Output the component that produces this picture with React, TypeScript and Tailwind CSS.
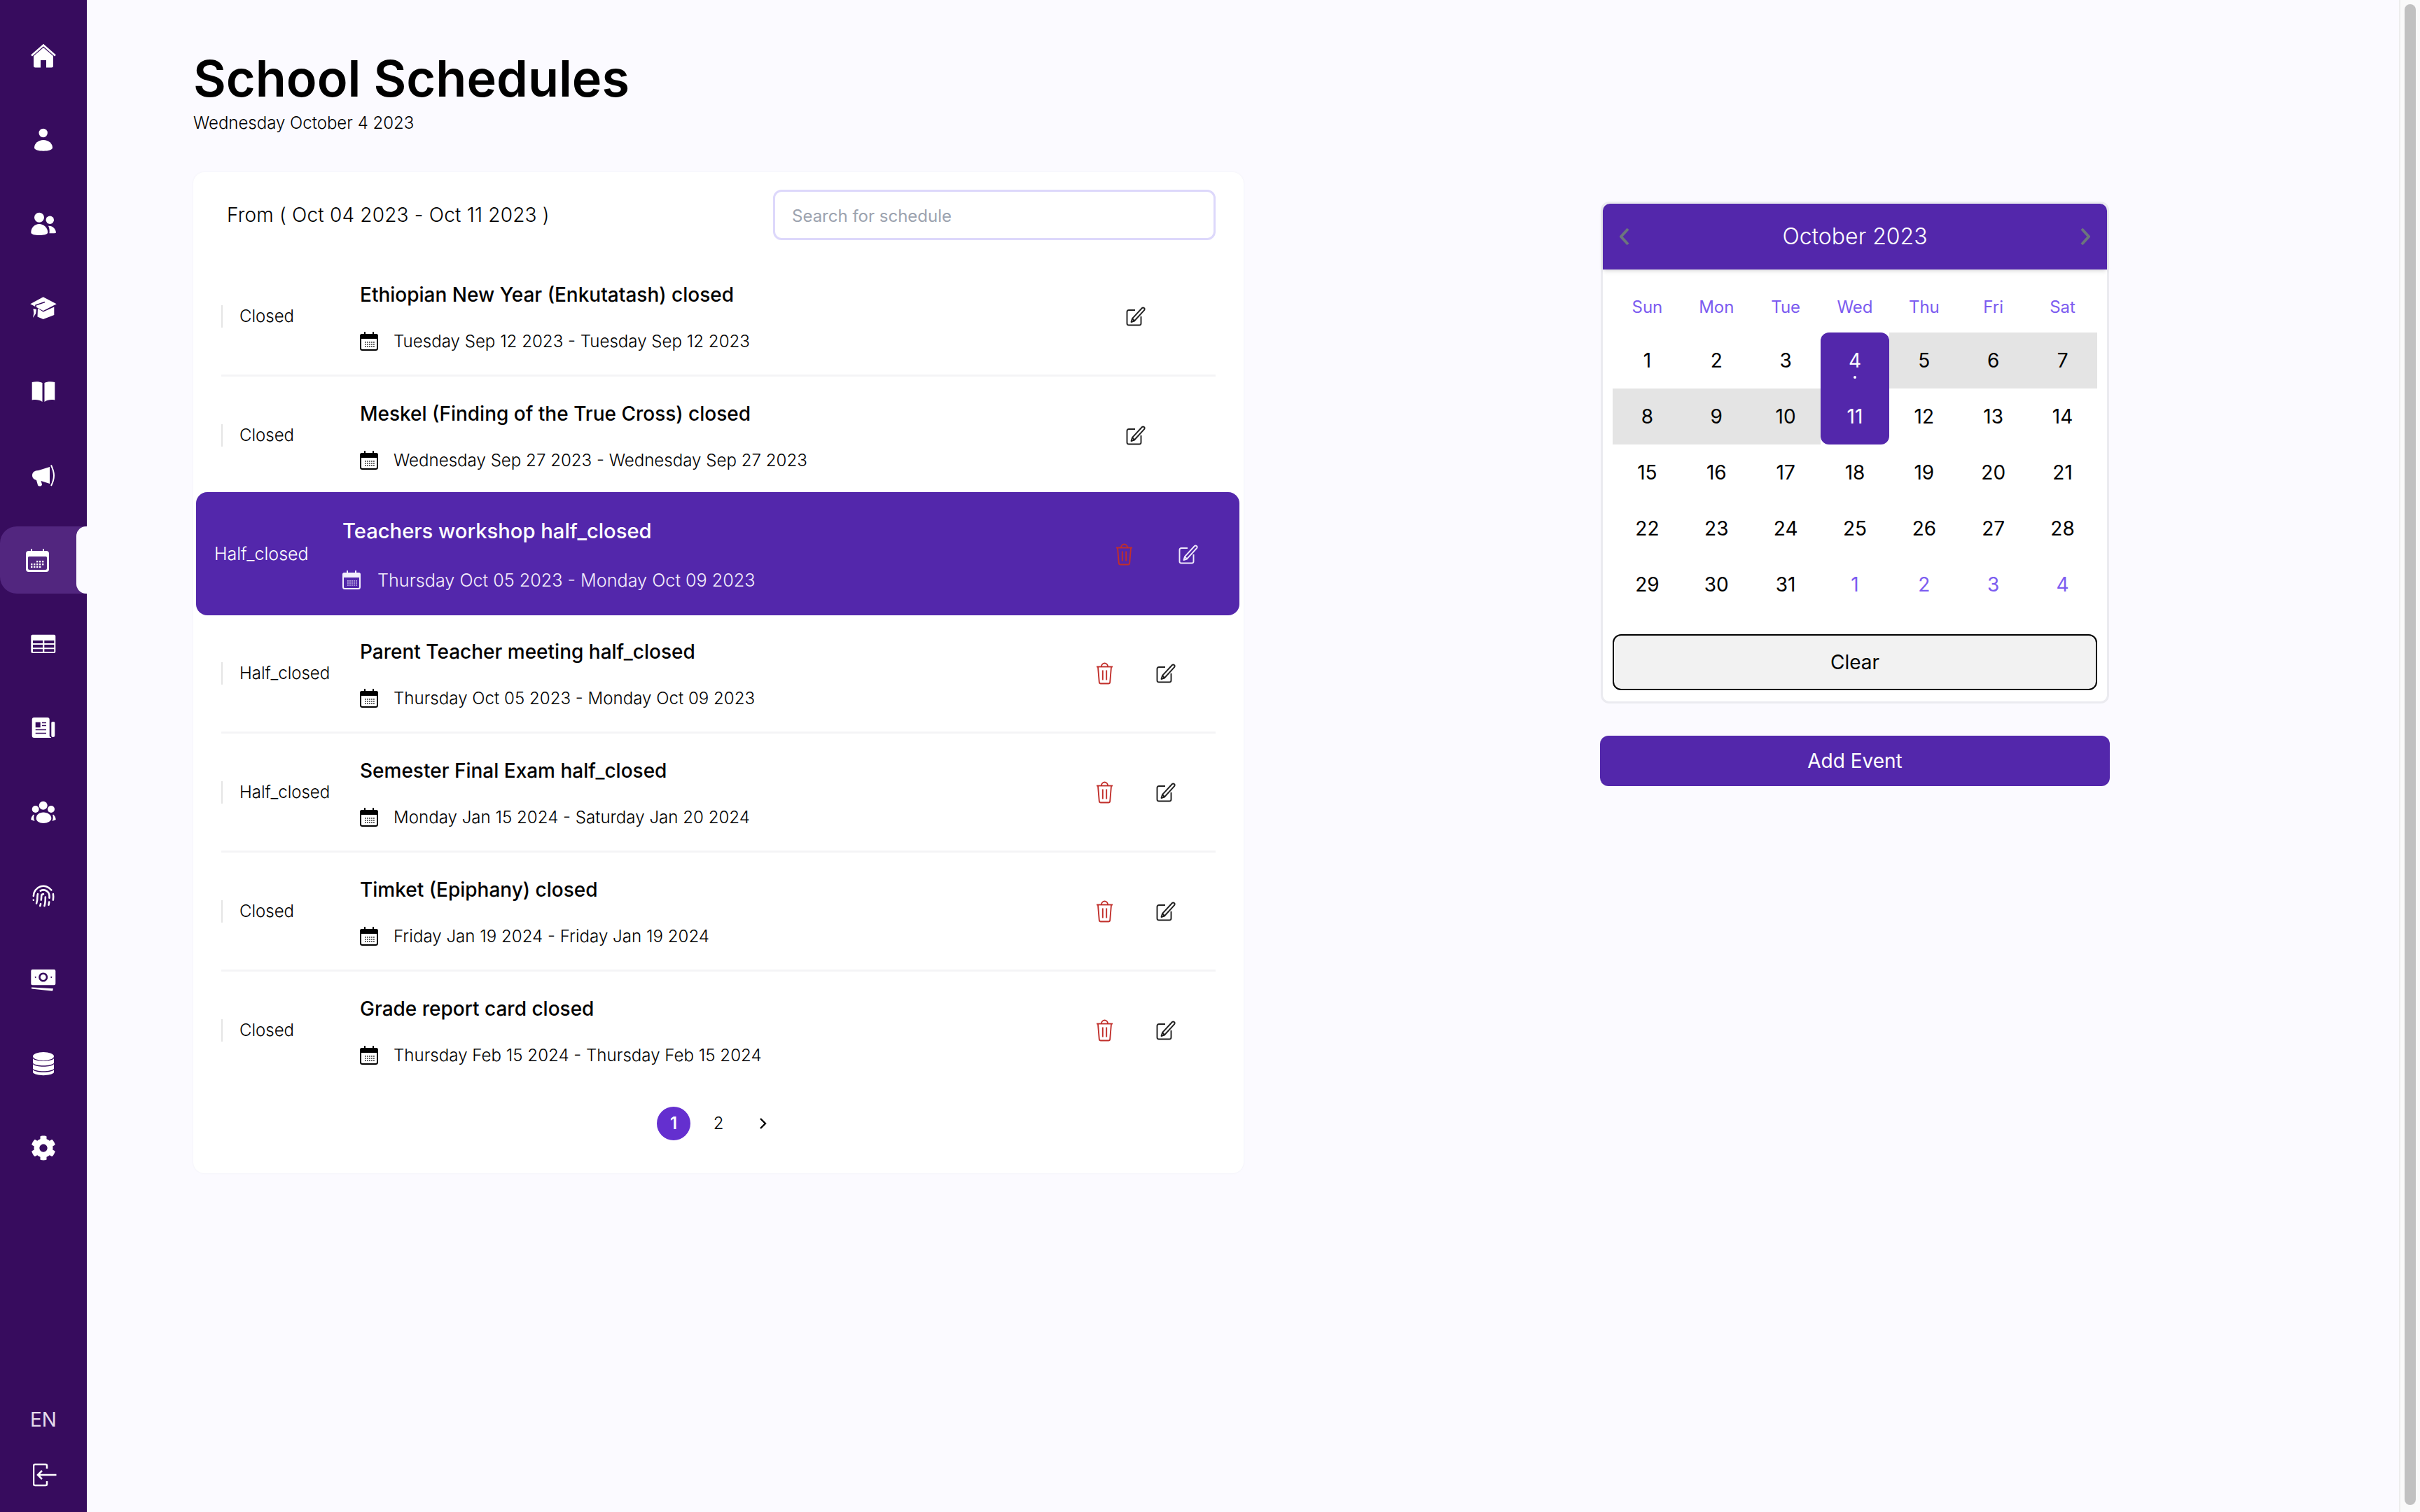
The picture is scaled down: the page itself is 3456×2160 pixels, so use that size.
import type { FC, ReactNode } from "react";
import { FaCog } from "react-icons/fa";
import { Fingerprint } from "lucide-react";

type Schedule = {
  status: string;
  title: string;
  range: string;
  canDelete?: boolean;
  active?: boolean;
};

const schedules: Schedule[] = [
  {
    status: "Closed",
    title: "Ethiopian New Year (Enkutatash) closed",
    range: "Tuesday Sep 12 2023 - Tuesday Sep 12 2023",
  },
  {
    status: "Closed",
    title: "Meskel (Finding of the True Cross) closed",
    range: "Wednesday Sep 27 2023 - Wednesday Sep 27 2023",
  },
  {
    status: "Half_closed",
    title: "Teachers workshop half_closed",
    range: "Thursday Oct 05 2023 - Monday Oct 09 2023",
    canDelete: true,
    active: true,
  },
  {
    status: "Half_closed",
    title: "Parent Teacher meeting half_closed",
    range: "Thursday Oct 05 2023 - Monday Oct 09 2023",
    canDelete: true,
  },
  {
    status: "Half_closed",
    title: "Semester Final Exam half_closed",
    range: "Monday Jan 15 2024 - Saturday Jan 20 2024",
    canDelete: true,
  },
  {
    status: "Closed",
    title: "Timket (Epiphany) closed",
    range: "Friday Jan 19 2024 - Friday Jan 19 2024",
    canDelete: true,
  },
  {
    status: "Closed",
    title: "Grade report card closed",
    range: "Thursday Feb 15 2024 - Thursday Feb 15 2024",
    canDelete: true,
  },
];

// Sidebar glyphs all share one 40x40 box
const Glyph: FC<{ children: ReactNode }> = ({ children }) => (
  <svg width="40" height="40" viewBox="0 0 40 40" fill="#fff">
    {children}
  </svg>
);

const navIcons: ReactNode[] = [
  <Glyph key="home">
    <path d="M6 20 20 8 34 20V34a2.5 2.5 0 0 1-2.5 2.5H24V26H16V36.5H8.5A2.5 2.5 0 0 1 6 34Z" />
    <path d="M3 19.5 20 4.5 37 19.5" fill="none" stroke="#fff" strokeWidth="2.8" />
  </Glyph>,
  <Glyph key="user">
    <circle cx="19.7" cy="10" r="6.2" />
    <path d="M7 31C7 25 12.5 20 20 20 27.5 20 33 25 33 31 33 34 27 35.7 20 35.7 13 35.7 7 34 7 31Z" />
  </Glyph>,
  <Glyph key="friends">
    <circle cx="14" cy="10.7" r="7" />
    <circle cx="29.3" cy="14.3" r="5.7" />
    <path d="M2.3 32C2.3 25 7.5 20 14 20 20.5 20 26 25 26.3 32 26 35 20 36 14 36 8 36 2.3 35 2.3 32Z" />
    <path d="M27 22.7C33 22 38 27 38 32.5 36 33.5 32 33.5 28.5 33.2 29 29 28.5 25.5 27 22.7Z" />
  </Glyph>,
  <Glyph key="cap">
    <path d="M19.7 4.3 38.7 14.3 19.7 24 1.3 14.3Z" />
    <path d="M22 11.5 9 16V20" fill="none" stroke="#370c5e" strokeWidth="1.6" />
    <path d="M12 20.5 19.7 25.5 35.3 18.5V30L19.7 36 11.5 32.5Z" />
    <path d="M5.5 21 10 22 9.2 28 5 34 6.3 27.5Z" />
  </Glyph>,
  <Glyph key="book">
    <path d="M3.7 6C9 4.5 15 5 18.5 7V34C14 31 9 30.5 3.7 31.5Z" />
    <path d="M36.3 6C31 4.5 25 5 21.5 7V34C26 31 31 30.5 36.3 31.5Z" />
  </Glyph>,
  <Glyph key="horn">
    <path d="M29 7 13 12C7 12 4 15 4 19 4 23 7 25 10 26L12 33C13 35.5 18 35 18 32L16.5 27 29 31Z" />
    <path d="M31 4.5C33.5 10 35 15 35 19.3 35 24 33.5 29 31 34" fill="none" stroke="#fff" strokeWidth="2" />
  </Glyph>,
  <svg key="calendar" width="33" height="33" viewBox="0 0 33 33" fill="#fff">
    <path
      fillRule="evenodd"
      d="M7 0H9V3H24V0H26V3H29A4 4 0 0 1 33 7V29A4 4 0 0 1 29 33H4A4 4 0 0 1 0 29V7A4 4 0 0 1 4 3H7ZM4.5 11A1.5 1.5 0 0 0 3 12.500V28A2 2 0 0 0 5 30H28A2 2 0 0 0 30 28V12.500A1.500 1.500 0 0 0 28.500 11Z"
    />
    {[
      [15, 17],
      [19, 17],
      [23, 17],
      [7, 21],
      [11, 21],
      [15, 21],
      [19, 21],
      [23, 21],
      [7, 24.7],
      [11, 24.7],
      [15, 24.7],
      [19, 24.7],
    ].map(([x, y]) => (
      <rect key={`${x}-${y}`} x={x} y={y} width="2.400" height="2.400" />
    ))}
  </svg>,
  <Glyph key="table">
    <path
      fillRule="evenodd"
      d="M4.300 6.700H35.300A2 2 0 0 1 37.300 8.700V31A2 2 0 0 1 35.300 33H4.300A2 2 0 0 1 2.300 31V8.700A2 2 0 0 1 4.300 6.700ZM5 15V19H19V15ZM21.300 15V19H35.300V15ZM5 21V25.300H19V21ZM21.300 21V25.300H35.300V21ZM5 27.300V31H19V27.300ZM21.300 27.300V31H35.300V27.300Z"
    />
  </Glyph>,
  <Glyph key="news">
    <path
      fillRule="evenodd"
      d="M6.700 5H25.700A3 3 0 0 1 28.700 8V31C28.700 32 29.500 33 31 33.300V34H6.700A3 3 0 0 1 3.700 31V8A3 3 0 0 1 6.700 5ZM8.700 11.700V19.300H15.700V11.700ZM18 11.700V13.300H24V11.700ZM18 15.700V17.300H24V15.700ZM8.700 21.700V23.300H24V21.700ZM8.700 26.700V28.300H24V26.700Z"
    />
    <path d="M31.300 12.500A1.500 1.500 0 0 1 32.800 11H34.800A1.500 1.500 0 0 1 36.300 12.500V30.500A2.500 2.500 0 0 1 31.300 30.500Z" />
  </Glyph>,
  <Glyph key="group">
    <circle cx="19.700" cy="10.700" r="6" />
    <circle cx="8.700" cy="16" r="5" />
    <circle cx="31" cy="16" r="5" />
    <path d="M9.700 29C9.700 24 14 20.500 20 20.500 26 20.500 31.300 24 31.300 29 31.300 33 26 36 20 36 14 36 9.700 33 9.700 29Z" />
    <path d="M6 23.500C3.500 25.500 2.300 28.500 2.300 31L7.500 33C6 30 6 27 6.800 24.500Z" />
    <path d="M34 23.500C36.500 25.500 37.700 28.500 37.700 31L32.500 33C34 30 34 27 33.200 24.500Z" />
  </Glyph>,
  <Fingerprint key="finger" size={34} strokeWidth={1.8} color="#fff" />,
  <Glyph key="money">
    <path
      fillRule="evenodd"
      d="M4.300 5H35.300A2 2 0 0 1 37.300 7V25.300A2 2 0 0 1 35.300 27.300H4.300A2 2 0 0 1 2.300 25.300V7A2 2 0 0 1 4.300 5ZM19.700 9.500A6.500 6.500 0 1 0 19.701 9.500ZM19.700 12A4 4 0 1 1 19.699 12ZM8.700 15A1 1 0 1 0 8.701 15ZM31.300 15A1 1 0 1 0 31.301 15Z"
    />
    <path d="M3 30.500 34 32.300 33 35.700 3 32.500Z" />
  </Glyph>,
  <Glyph key="db">
    <ellipse cx="20" cy="9" rx="15" ry="6" />
    <path d="M5 12C8 17 32 17 35 12V18.500C32 23.500 8 23.500 5 18.500Z" />
    <path d="M5 20C8 25 32 25 35 20V26.500C32 31.500 8 31.500 5 26.500Z" />
    <path d="M5 28C8 33 32 33 35 28V32C32 37.500 8 37.500 5 32Z" />
  </Glyph>,
  <FaCog key="cog" size={36} color="#fff" />,
];

const Sidebar: FC = () => (
  <aside className="flex h-full w-[124px] shrink-0 flex-col bg-[#370c5e] pt-[20px] text-white">
    {navIcons.map((icon, i) => (
      <div
        key={i}
        className={
          i === 6
            ? "relative my-[12px] flex h-[96px] items-center rounded-l-[24px] bg-[#52267f] pl-[37px]"
            : "flex h-[120px] items-center justify-center"
        }
      >
        {icon}
        {i === 6 && (
          <span className="absolute right-0 top-0 h-full w-[15px] rounded-l-[14px] bg-[#fbfaff]" />
        )}
      </div>
    ))}
    <div className="mt-auto flex flex-col items-center pb-[36px]">
      <span className="text-[28px] leading-[42px] text-[#e5dcec]">EN</span>
      <svg
        className="ml-[4px] mt-[41px]"
        width="34"
        height="34"
        viewBox="0 0 34 34"
        fill="none"
        stroke="#fff"
        strokeWidth="2.500"
      >
        <path d="M20 8V4A2 2 0 0 0 18 2H3A2 2 0 0 0 1 4V30A2 2 0 0 0 3 32H18A2 2 0 0 0 20 30V26" />
        <path d="M33.500 17H7M13 11 7 17 13 23" />
      </svg>
    </div>
  </aside>
);

const RangeIcon: FC = () => (
  <svg className="shrink-0" width="26" height="27" viewBox="0 0 26 27" fill="currentColor">
    <path d="M6 0H8V3H18V0H20V3H23A3 3 0 0 1 26 6V10H0V6A3 3 0 0 1 3 3H6Z" />
    <rect x="1" y="4" width="24" height="22" rx="2.500" fill="none" stroke="currentColor" strokeWidth="2" />
    {[14, 17, 20].map((y) =>
      [7, 10, 13, 16, 19].map((x) => (
        <rect key={`${x}-${y}`} x={x} y={y} width="1.800" height="1.800" opacity="0.7" />
      ))
    )}
  </svg>
);

const EditIcon: FC = () => (
  <svg
    className="shrink-0"
    width="28"
    height="28"
    viewBox="0 0 28 28"
    fill="none"
    stroke="currentColor"
    strokeWidth="1.900"
    strokeLinejoin="round"
  >
    <path d="M13 5H4A2.500 2.500 0 0 0 1.500 7.500V24A2.500 2.500 0 0 0 4 26.500H19A2.500 2.500 0 0 0 21.500 24V14" />
    <path d="M23 2A2.200 2.200 0 0 1 26.300 4.800L12 20.500 7.500 22 9 17.200Z" />
    <path d="M9 17.200 12 20.500" />
  </svg>
);

const TrashIcon: FC = () => (
  <svg
    className="shrink-0 text-[#c12f2b]"
    width="25"
    height="32"
    viewBox="0 0 25 32"
    fill="none"
    stroke="currentColor"
    strokeWidth="1.900"
    strokeLinejoin="round"
  >
    <path d="M8 6A4.500 4.500 0 0 1 17 6" />
    <path d="M1 6.500H24" />
    <path d="M3 6.500 4.800 28.500A2.200 2.200 0 0 0 7 30.500H18A2.200 2.200 0 0 0 20.200 28.500L22 6.500" />
    <path d="M9.800 11.500V25.500M15.200 11.500V25.500" />
  </svg>
);

const Row: FC<{ item: Schedule; noBorder: boolean }> = ({ item, noBorder }) => {
  if (item.active) {
    return (
      <div className="relative -mb-[1px] -mt-[5px] ml-[4px] flex h-[176px] w-[1490px] items-center rounded-[16px] bg-[#5327ab] text-white">
        <span className="ml-[26px] w-[183px] pt-[1px] text-[25px] font-light">{item.status}</span>
        <div className="flex-1 pt-[3px]">
          <div className="text-[29.2px] font-medium leading-[40px]">{item.title}</div>
          <div className="mt-[32px] flex items-center gap-[24px] text-[25.2px] font-light leading-[36px] text-[#f3eefc]">
            <RangeIcon />
            {item.range}
          </div>
        </div>
        <div className="flex w-[236px] items-center justify-center gap-[65px] pt-[1px]">
          <TrashIcon />
          <span className="text-[#efe9fb]">
            <EditIcon />
          </span>
        </div>
      </div>
    );
  }
  return (
    <div
      className={
        "mx-[40px] flex h-[170px] items-center border-[#f4f4f6] " +
        (noBorder ? "pb-[3px]" : "border-b-[3px]")
      }
    >
      <span className="w-[198px] border-l-2 border-[#e5e5e5] pl-[24px] text-[24px] font-light leading-[32px]">
        {item.status}
      </span>
      <div className="flex-1 pt-[3px]">
        <div className="text-[28px] font-medium leading-[40px]">{item.title}</div>
        <div className="mt-[29px] flex items-center gap-[22px] text-[24.1px] font-light leading-[36px]">
          <RangeIcon />
          {item.range}
        </div>
      </div>
      <div className="flex w-[228px] items-center justify-center gap-[61px] text-[#1f1f1f]">
        {item.canDelete && <TrashIcon />}
        <EditIcon />
      </div>
    </div>
  );
};

const days = [
  1, 2, 3, 4, 5, 6, 7, 8, 9, 10, 11, 12, 13, 14, 15, 16, 17, 18, 19, 20, 21, 22, 23, 24, 25, 26,
  27, 28, 29, 30, 31, 1, 2, 3, 4,
];

const dayClass = (i: number) => {
  if (i === 3) return "bg-[#5327ab] text-white rounded-t-[12px]";
  if (i === 10) return "bg-[#5327ab] text-white rounded-b-[12px]";
  if (i > 3 && i < 10) return "bg-[#e4e4e4] text-black";
  if (i > 30) return "text-[#7c5cf0]";
  return "text-black";
};

const Calendar: FC = () => (
  <div className="w-[728px]">
    <div className="mx-px rounded-[12px] border-[3px] border-[#ebebf0] bg-white">
      <div className="flex h-[94px] items-center justify-between rounded-t-[10px] bg-[#5327ab] px-[24px] shadow-md">
        <svg width="14" height="26" viewBox="0 0 14 26" fill="none" stroke="#6c757d" strokeWidth="4">
          <path d="M12 2 2 13 12 24" />
        </svg>
        <span className="text-[32px] font-light text-white">October 2023</span>
        <svg width="14" height="26" viewBox="0 0 14 26" fill="none" stroke="#6c757d" strokeWidth="4">
          <path d="M2 2 12 13 2 24" />
        </svg>
      </div>
      <div className="px-[14px] pb-[16px] pt-[36px]">
        <div className="grid grid-cols-7 text-center text-[24px] text-[#7c5cf0]">
          {["Sun", "Mon", "Tue", "Wed", "Thu", "Fri", "Sat"].map((d) => (
            <div key={d} className="h-[54px]">
              {d}
            </div>
          ))}
        </div>
        <div className="grid grid-cols-7 text-center text-[28px]">
          {days.map((d, i) => (
            <div key={i} className={"relative flex h-[80px] items-center justify-center " + dayClass(i)}>
              {d}
              {i === 3 && (
                <span className="absolute bottom-[14px] h-[4px] w-[4px] rounded-full bg-white" />
              )}
            </div>
          ))}
        </div>
        <button className="mt-[31px] h-[80px] w-full rounded-[12px] border-2 border-black bg-[#f2f2f2] text-[28px]">
          Clear
        </button>
      </div>
    </div>
    <button className="mt-[46px] h-[72px] w-full rounded-[12px] bg-[#5327ab] text-[28px] text-white">
      Add Event
    </button>
  </div>
);

const App: FC = () => (
  <div className="flex h-[2160px] w-[3456px] overflow-hidden bg-[#fbfaff] font-['Inter',sans-serif] text-black">
    <Sidebar />
    <main className="flex-1 pl-[152px] pt-[66px]">
      <h1 className="text-[72px] font-semibold leading-[92px]">School Schedules</h1>
      <p className="mt-[2px] text-[24px] font-light leading-[32px]">Wednesday October 4 2023</p>
      <div className="mt-[54px] flex items-start">
        <section className="w-[1500px] rounded-[16px] bg-white pb-[47px] shadow-[0_0_3px_#f0f0f5]">
          <div className="flex h-[122px] items-center justify-between pl-[48px] pr-[40px]">
            <span className="text-[28px] font-light tracking-[0.2px]">From ( Oct 04 2023 - Oct 11 2023 )</span>
            <input
              className="h-[72px] w-[632px] rounded-[12px] border-[3px] border-[#ddd8fb] px-[24px] pt-[2px] text-[24px] placeholder:text-[#9ca3af]"
              placeholder="Search for schedule"
            />
          </div>
          <div>
            {schedules.map((s, i) => (
              <Row
                key={s.title}
                item={s}
                noBorder={i === schedules.length - 1 || Boolean(schedules[i + 1]?.active)}
              />
            ))}
          </div>
          <div className="mt-[23px] flex items-center justify-center gap-[16px] text-[24px]">
            <span className="flex h-[48px] w-[48px] items-center justify-center rounded-full bg-[#642fcf] font-semibold text-white">
              1
            </span>
            <span className="flex h-[48px] w-[48px] items-center justify-center font-light">2</span>
            <span className="flex h-[48px] w-[48px] items-center justify-center">
              <svg width="12" height="18" viewBox="0 0 12 18" fill="none" stroke="#000" strokeWidth="2.400">
                <path d="M2 2 9 9 2 16" />
              </svg>
            </span>
          </div>
        </section>
        <div className="ml-[509px] mt-[42px]">
          <Calendar />
        </div>
      </div>
    </main>
    <div className="w-[30px] shrink-0 border-l-2 border-[#ededed] bg-[#fafafa] px-[6px] py-[6px]">
      <div className="h-[2144px] rounded-full bg-[#c1c1c1]" />
    </div>
  </div>
);

export default App;
